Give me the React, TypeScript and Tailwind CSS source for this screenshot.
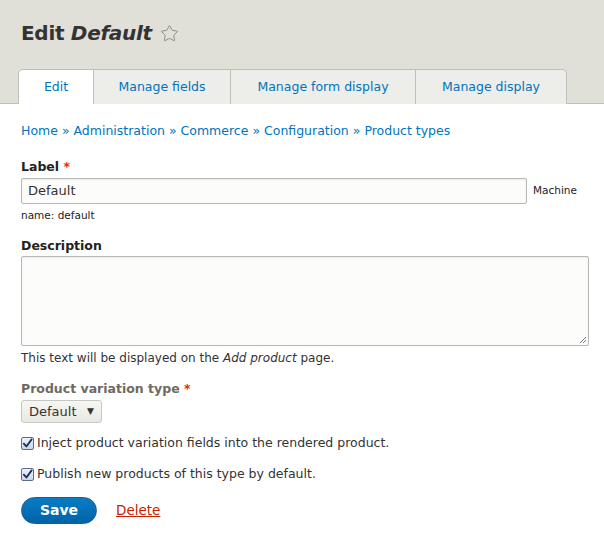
import { Star } from "lucide-react";

function Check() {
  return (
    <span className="w-[13px] h-[13px] rounded-[2px] border border-[#5b6d8c] bg-gradient-to-b from-[#eef3fb] to-[#c8d6ee] flex items-center justify-center shrink-0">
      <svg viewBox="0 0 12 12" className="w-[11px] h-[11px]">
        <path d="M2 6.2 L4.8 9.2 L10.5 1.5" fill="none" stroke="#1d2e55" strokeWidth="2" strokeLinecap="round" strokeLinejoin="round" />
      </svg>
    </span>
  );
}

export default function App() {
  const tabs = [
    { label: "Edit", w: "w-[76px]", active: true },
    { label: "Manage fields", w: "w-[137px]" },
    { label: "Manage form display", w: "w-[185px]" },
    { label: "Manage display", w: "w-[151px]" },
  ];
  return (
    <div className="w-[604px] h-[537px] bg-white overflow-hidden font-['DejaVu_Sans',sans-serif] text-[#222]">
      {/* Header */}
      <div className="bg-[#e0e0d8] pt-[19px] px-[18px] border-b border-[#bfbfba]">
        <h1 className="pl-[3px] h-[28px] text-[20px] leading-[28px] font-bold tracking-[-0.3px] text-[#333] flex items-center gap-[8px]">
          <span>
            Edit <em>Default</em>
          </span>
          <Star className="w-[19px] h-[19px] text-[#8a8a78]" strokeWidth={1.2} />
        </h1>
        <div className="flex mt-[22px] -mb-px">
          {tabs.map((t, i) => (
            <div
              key={t.label}
              className={`${t.w} h-[35px] flex items-center justify-center text-[12.5px] text-[#0074bd] border-t border-[#bfbfba] ${
                t.active ? "bg-white border-l rounded-tl-[5px] border-r" : "bg-[#ededea] border-r"
              } ${i === tabs.length - 1 ? "rounded-tr-[5px]" : ""}`}
            >
              {t.label}
            </div>
          ))}
        </div>
      </div>

      {/* Content */}
      <div className="px-[21px]">
        <div className="mt-[18px] text-[12.5px] leading-[18px] text-[#0074bd]">
          Home » Administration » Commerce » Configuration » Product types
        </div>

        <div className="mt-[18px] text-[12.5px] leading-[18px] font-bold">
          Label <span className="text-[#e62600]">*</span>
        </div>
        <div className="mt-[2px] flex items-center">
          <div className="w-[506px] h-[26px] border border-[#b8b8b8] rounded-[2px] bg-[#fcfcfa] px-[6px] flex items-center text-[13px] text-[#333] shadow-[inset_0_1px_2px_rgba(0,0,0,0.08)]">
            Default
          </div>
          <span className="ml-[6px] text-[10.5px]">Machine</span>
        </div>
        <div className="mt-[4px] text-[10.5px] leading-[14px]">name: default</div>

        <div className="mt-[15px] text-[12.5px] leading-[18px] font-bold">Description</div>
        <div className="mt-[1px] relative w-[568px] h-[90px] border border-[#b8b8b8] rounded-[2px] bg-[#fcfcfa] shadow-[inset_0_1px_2px_rgba(0,0,0,0.08)]">
          <svg viewBox="0 0 8 8" className="absolute right-[1px] bottom-[1px] w-[8px] h-[8px]">
            <path d="M1 7 L7 1 M4 7 L7 4" stroke="#777" strokeWidth="1" />
          </svg>
        </div>
        <div className="mt-[4px] text-[12px] leading-[16px] text-[#333]">
          This text will be displayed on the <em>Add product</em> page.
        </div>

        <div className="mt-[14px] text-[12.5px] leading-[18px] font-bold text-[#6e6a62]">
          Product variation type <span className="text-[#e62600]">*</span>
        </div>
        <div className="mt-[2px] w-[81px] h-[23px] border border-[#c8c8c2] rounded-[3px] bg-gradient-to-b from-[#f6f6f3] to-[#e8e8e3] flex items-center justify-between pl-[7px] pr-[7px] text-[13px] text-[#333]">
          <span>Default</span>
          <span className="text-[9px] text-[#333]">▼</span>
        </div>

        <div className="mt-[11px] flex items-center gap-[3px] text-[12.5px] leading-[18px] text-[#333]">
          <Check />
          <span>Inject product variation fields into the rendered product.</span>
        </div>
        <div className="mt-[13px] flex items-center gap-[3px] text-[12.5px] leading-[18px] text-[#333]">
          <Check />
          <span>Publish new products of this type by default.</span>
        </div>

        <div className="mt-[14px] flex items-center">
          <div className="w-[76px] h-[27px] rounded-full bg-gradient-to-b from-[#0a7cc4] to-[#0063a8] border border-[#1e5c90] text-white font-bold text-[14px] flex items-center justify-center">
            Save
          </div>
          <span className="ml-[19px] text-[13.5px] text-[#c72100] underline">Delete</span>
        </div>
      </div>
    </div>
  );
}
